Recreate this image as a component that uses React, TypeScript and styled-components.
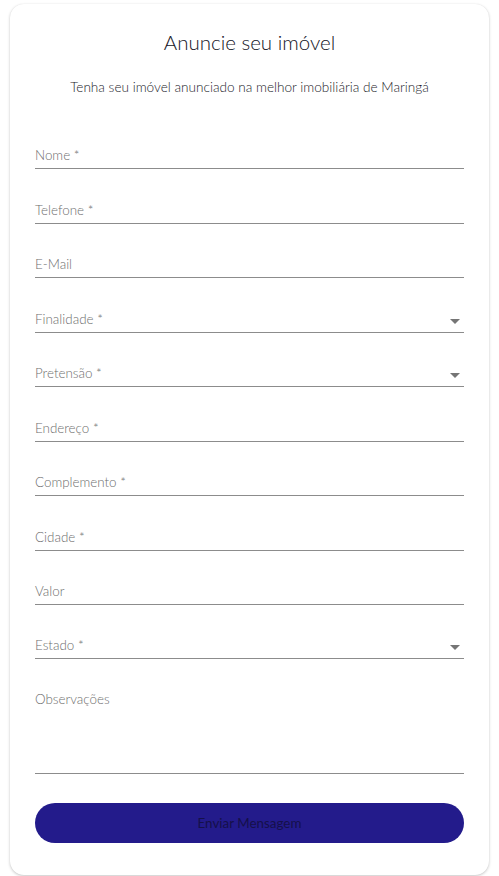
import React from "react";
import styled, { createGlobalStyle } from "styled-components";

const Global = createGlobalStyle`
  html, body { margin: 0; padding: 0; background: #ffffff; }
  body { font-family: "Lato", "Noto Sans", sans-serif; }
  * { box-sizing: border-box; }
`;

const Page = styled.div`
  padding: 4px 10px 1px 10px;
`;

const Card = styled.div`
  background: #fff;
  border-radius: 14px;
  box-shadow: 0 1px 3px rgba(0,0,0,0.22), 0 0 1px rgba(0,0,0,0.08);
  padding: 26px 25px 32px 25px;
  display: flex;
  flex-direction: column;
`;

const Title = styled.h1`
  margin: 0;
  text-align: center;
  font-size: 20.5px;
  font-weight: 300;
  color: #14141f;
  line-height: 24px;
`;

const Subtitle = styled.p`
  margin: 25px 0 0 0;
  text-align: center;
  font-size: 13.6px;
  font-weight: 300;
  color: #1c1c2a;
  line-height: 16px;
`;

const Form = styled.div`
  margin-top: 20px;
  display: flex;
  flex-direction: column;
`;

const Field = styled.div<{ $tall?: boolean }>`
  height: ${(p) => (p.$tall ? "115px" : "54.44px")};
  display: flex;
  align-items: ${(p) => (p.$tall ? "flex-start" : "flex-end")};
  justify-content: space-between;
  padding-top: ${(p) => (p.$tall ? "33px" : "0")};
  padding-bottom: 5px;
  border-bottom: 1px solid #8c8c8c;
`;

const Label = styled.span`
  font-size: 13.4px;
  font-weight: 300;
  color: #6e6e6e;
  line-height: 15px;
`;

const Arrow = styled.svg`
  width: 24px;
  height: 24px;
  margin-right: -3px;
  margin-bottom: -6px;
  fill: #757575;
`;

const Button = styled.button`
  margin-top: 29px;
  height: 40px;
  border: none;
  border-radius: 20px;
  background: #231b8b;
  color: #15104a;
  font-family: inherit;
  font-size: 13.4px;
  font-weight: 400;
  width: 100%;
`;

type F = { label: string; select?: boolean; tall?: boolean };

const fields: F[] = [
  { label: "Nome *" },
  { label: "Telefone *" },
  { label: "E-Mail" },
  { label: "Finalidade *", select: true },
  { label: "Pretensão *", select: true },
  { label: "Endereço *" },
  { label: "Complemento *" },
  { label: "Cidade *" },
  { label: "Valor" },
  { label: "Estado *", select: true },
  { label: "Observações", tall: true },
];

export default function App() {
  return (
    <>
      <Global />
      <Page>
        <Card>
          <Title>Anuncie seu imóvel</Title>
          <Subtitle>Tenha seu imóvel anunciado na melhor imobiliária de Maringá</Subtitle>
          <Form>
            {fields.map((f) => (
              <Field key={f.label} $tall={f.tall}>
                <Label>{f.label}</Label>
                {f.select && (
                  <Arrow viewBox="0 0 24 24">
                    <path d="M7 10l5 5 5-5z" />
                  </Arrow>
                )}
              </Field>
            ))}
          </Form>
          <Button>Enviar Mensagem</Button>
        </Card>
      </Page>
    </>
  );
}
